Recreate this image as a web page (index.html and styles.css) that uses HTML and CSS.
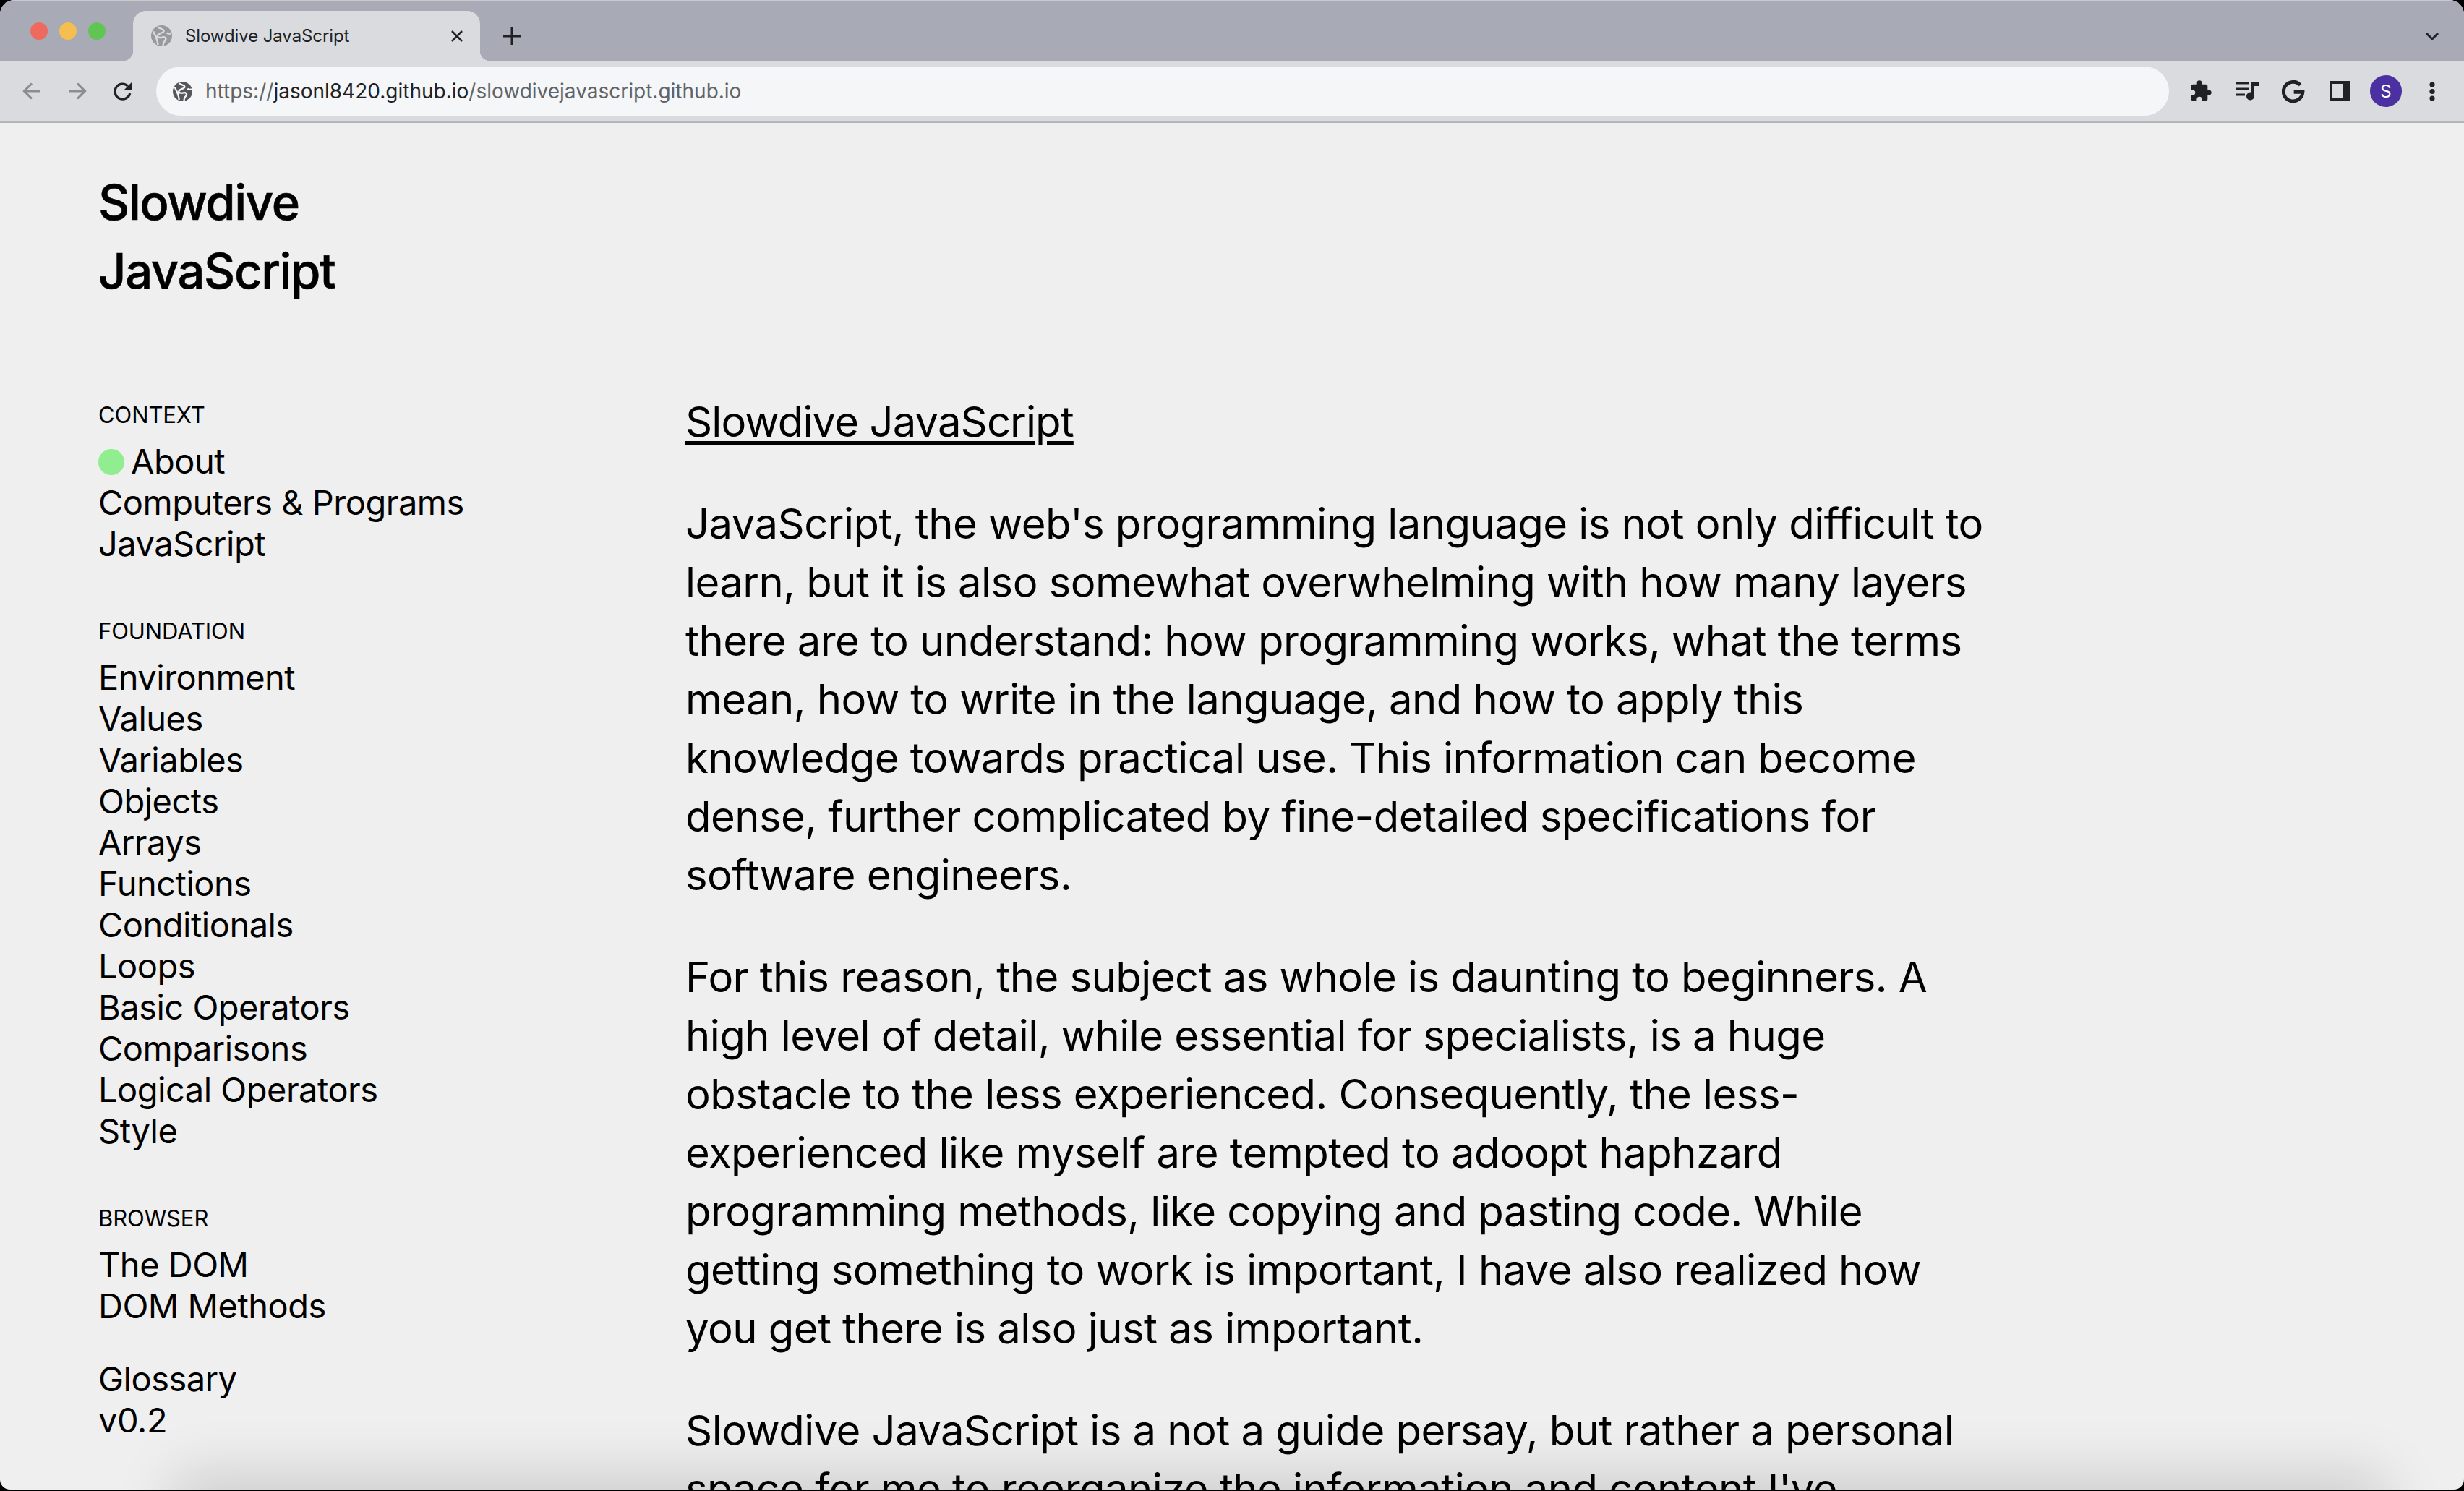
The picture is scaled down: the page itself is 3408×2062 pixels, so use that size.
FILE: index.html
```html
<!DOCTYPE html>
<html lang="en">
<head>
	<meta charset="UTF-8">
	<title>Slowdive JavaScript</title>
	<link rel="stylesheet" href="styles.css">
</head>
<body>
	<div class="window">
		<div class="tabbar">
			<div class="lights">
				<span class="light red"></span>
				<span class="light yellow"></span>
				<span class="light green"></span>
			</div>
			<div class="tab">
				<svg width="29" height="29" viewBox="0 0 28 28"><circle cx="14" cy="14" r="14" fill="#97999d"/><path d="M9 2c2 3 7 2 8 5s-6 3-8 6 3 4 6 3 6 1 4 4-3 3-3 8M3 8c1 4 3 5 4 9s2 5 2 9M21 10c2 2 4 1 6 1" fill="none" stroke="#d9dade" stroke-width="2.4"/></svg>
				<span class="tab-title">Slowdive JavaScript</span>
				<svg width="18" height="18" viewBox="0 0 18 18"><path d="M2 2l14 14M16 2L2 16" stroke="#202124" stroke-width="2.6" fill="none"/></svg>
			</div>
			<svg class="new-tab" width="24" height="24" viewBox="0 0 24 24"><path d="M12 0v24M0 12h24" stroke="#202124" stroke-width="3" fill="none"/></svg>
			<svg class="tab-menu" width="20" height="13" viewBox="0 0 20 13"><path d="M2 2l8 8 8-8" fill="none" stroke="#202124" stroke-width="3"/></svg>
		</div>
		<div class="toolbar">
			<svg class="nav" width="36" height="36" viewBox="0 0 24 24"><path d="M20 12H5M12 5l-7 7 7 7" fill="none" stroke="#8b8d91" stroke-width="2.1"/></svg>
			<svg class="nav" width="36" height="36" viewBox="0 0 24 24"><path d="M4 12h15M12 5l7 7-7 7" fill="none" stroke="#8b8d91" stroke-width="2.1"/></svg>
			<svg class="nav" width="36" height="36" viewBox="0 0 24 24"><path d="M18.5 14a7 7 0 1 1-1.9-6.6" fill="none" stroke="#202124" stroke-width="2.2"/><path d="M20 4v7h-7z" fill="#202124"/></svg>
			<div class="omnibox">
				<svg width="27" height="27" viewBox="0 0 28 28"><circle cx="14" cy="14" r="14" fill="#55575b"/><path d="M9 2c2 3 7 2 8 5s-6 3-8 6 3 4 6 3 6 1 4 4-3 3-3 8M3 8c1 4 3 5 4 9s2 5 2 9M21 10c2 2 4 1 6 1" fill="none" stroke="#f5f6f8" stroke-width="2.4"/></svg>
				<span class="url"><span class="url-dim">https://</span>jasonl8420.github.io<span class="url-dim">/slowdivejavascript.github.io</span></span>
			</div>
			<div class="tools">
				<span class="tool"><svg width="32" height="32" viewBox="0 0 24 24"><path d="M20.5 11H19V7a2 2 0 0 0-2-2h-4V3.5a2.5 2.5 0 0 0-5 0V5H4a2 2 0 0 0-2 2v3.8h1.5a2.7 2.7 0 0 1 0 5.4H2V20a2 2 0 0 0 2 2h3.8v-1.5a2.7 2.7 0 0 1 5.4 0V22H17a2 2 0 0 0 2-2v-4h1.5a2.5 2.5 0 0 0 0-5z" fill="#202124"/></svg></span>
				<span class="tool"><svg width="32" height="26" viewBox="0 0 32 26"><path d="M0 2h19M0 10h19M0 18h13" stroke="#202124" stroke-width="3" fill="none"/><path d="M22 1h10v5h-6v14a5.5 5.5 0 1 1-4-5.2z" fill="#202124"/></svg></span>
				<span class="tool"><svg width="32" height="32" viewBox="0 0 24 24"><path d="M19.2 5.8A10 10 0 1 0 21.7 13H12.5" fill="none" stroke="#202124" stroke-width="3.6"/></svg></span>
				<span class="tool"><svg width="28" height="28" viewBox="0 0 28 28"><path d="M0 0h28v28H0z" fill="#202124"/><path d="M4 4h14v20H4z" fill="#dadbdf"/></svg></span>
				<span class="tool"><span class="avatar">S</span></span>
				<span class="tool"><svg width="8" height="27" viewBox="0 0 8 27"><circle cx="4" cy="4" r="3.6" fill="#202124"/><circle cx="4" cy="13.5" r="3.6" fill="#202124"/><circle cx="4" cy="23" r="3.6" fill="#202124"/></svg></span>
			</div>
		</div>
		<div class="page">
			<aside class="sidebar">
				<h1 class="site-title">Slowdive<br>JavaScript</h1>
				<div class="nav-group">
					<h2 class="nav-heading">CONTEXT</h2>
					<a class="nav-link"><span class="dot"></span>About</a>
					<a class="nav-link">Computers &amp; Programs</a>
					<a class="nav-link">JavaScript</a>
				</div>
				<div class="nav-group">
					<h2 class="nav-heading">FOUNDATION</h2>
					<a class="nav-link">Environment</a>
					<a class="nav-link">Values</a>
					<a class="nav-link">Variables</a>
					<a class="nav-link">Objects</a>
					<a class="nav-link">Arrays</a>
					<a class="nav-link">Functions</a>
					<a class="nav-link">Conditionals</a>
					<a class="nav-link">Loops</a>
					<a class="nav-link">Basic Operators</a>
					<a class="nav-link">Comparisons</a>
					<a class="nav-link">Logical Operators</a>
					<a class="nav-link">Style</a>
				</div>
				<div class="nav-group">
					<h2 class="nav-heading">BROWSER</h2>
					<a class="nav-link">The DOM</a>
					<a class="nav-link">DOM Methods</a>
				</div>
				<div class="nav-group">
					<a class="nav-link">Glossary</a>
					<a class="nav-link">v0.2</a>
				</div>
			</aside>
			<main class="content">
				<h2 class="content-title">Slowdive JavaScript</h2>
				<p>JavaScript, the web's programming language is not only difficult to learn, but it is also somewhat overwhelming with how many layers there are to understand: how programming works, what the terms mean, how to write in the language, and how to apply this knowledge towards practical use. This information can become dense, further complicated by fine-detailed specifications for software engineers.</p>
				<p>For this reason, the subject as whole is daunting to beginners. A high level of detail, while essential for specialists, is a huge obstacle to the less experienced. Consequently, the less-experienced like myself are tempted to adoopt haphzard programming methods, like copying and pasting code. While getting something to work is important, I have also realized how you get there is also just as important.</p>
				<p>Slowdive JavaScript is a not a guide persay, but rather a personal space for me to reorganize the information and content I've</p>
			</main>
			<div class="bottom-shadow"></div>
		</div>
	</div>
</body>
</html>
```
FILE: styles.css
```css
html, body {
	margin: 0;
	padding: 0;
	height: 100%;
	overflow: hidden;
}
body {
	background-color: #000;
	font-family: "Inter", "Liberation Sans", sans-serif;
	color: #000;
}
.window {
	height: 2060px;
	display: flex;
	flex-direction: column;
	background-color: #efefef;
	border-radius: 20px 20px 14px 14px;
	overflow: hidden;
}

/* tabs */
.tabbar {
	height: 84px;
	box-sizing: border-box;
	border-top: 2px solid #c9cad0;
	background-color: #a8aab5;
	display: flex;
	align-items: flex-end;
	flex-shrink: 0;
}
.lights {
	display: flex;
	gap: 16px;
	padding: 0 38px 0 42px;
	align-self: flex-start;
	margin-top: 29px;
}
.light {
	width: 24px;
	height: 24px;
	border-radius: 50%;
}
.red { background-color: #ee6a5f; }
.yellow { background-color: #f5bf4f; }
.green { background-color: #61c554; }
.tab {
	position: relative;
	width: 480px;
	height: 69px;
	background-color: #dadbdf;
	border-radius: 18px 18px 0 0;
	display: flex;
	align-items: center;
	padding: 0 23px 0 25px;
	box-sizing: border-box;
	gap: 18px;
}
.tab::before,
.tab::after {
	content: "";
	position: absolute;
	bottom: 0;
	width: 14px;
	height: 14px;
}
.tab::before {
	left: -14px;
	background: radial-gradient(circle at 0 0, transparent 14px, #dadbdf 14.5px);
}
.tab::after {
	right: -14px;
	background: radial-gradient(circle at 100% 0, transparent 14px, #dadbdf 14.5px);
}
.tab-title {
	flex: 1;
	font-size: 24px;
	letter-spacing: -0.1px;
	color: #202124;
}
.new-tab {
	margin: 0 0 22px 32px;
}
.tab-menu {
	margin: 0 34px 27px auto;
}

/* toolbar */
.toolbar {
	height: 86px;
	box-sizing: border-box;
	background-color: #dadbdf;
	display: flex;
	align-items: center;
	flex-shrink: 0;
	padding: 0 12px 0 26px;
	border-bottom: 2px solid #b4b5b9;
}
.nav {
	margin-right: 27px;
}
.omnibox {
	flex: 1;
	height: 68px;
	margin-left: 1px;
	background-color: #f5f6f8;
	border-radius: 34px;
	display: flex;
	align-items: center;
	gap: 18px;
	padding: 0 23px;
}
.url {
	font-size: 28px;
	color: #202124;
}
.url-dim {
	color: #5f6368;
}
.tools {
	display: flex;
	margin-left: 12px;
}
.tool {
	width: 64px;
	height: 64px;
	display: flex;
	align-items: center;
	justify-content: center;
}
.avatar {
	width: 44px;
	height: 44px;
	border-radius: 50%;
	background-color: #4a30a0;
	color: #fff;
	font-size: 24px;
	display: flex;
	align-items: center;
	justify-content: center;
}

/* page */
.page {
	flex: 1;
	display: flex;
	position: relative;
	overflow: hidden;
	min-height: 0;
}
.sidebar {
	width: 948px;
	padding: 62px 0 0 136px;
	box-sizing: border-box;
	flex-shrink: 0;
}
.site-title {
	margin: 0 0 103px;
	font-size: 67px;
	line-height: 95px;
	font-weight: 500;
	letter-spacing: -1.4px;
	-webkit-text-stroke: 0.6px #000;
}
.nav-group {
	margin-bottom: 44px;
}
.nav-heading {
	margin: 0 0 12px;
	padding-top: 26px;
	font-size: 31px;
	line-height: 46px;
	font-weight: 400;
	letter-spacing: -0.1px;
}
.nav-link {
	display: block;
	font-size: 47px;
	line-height: 57px;
	font-weight: 400;
	letter-spacing: -0.5px;
}
.dot {
	display: inline-block;
	width: 36px;
	height: 36px;
	border-radius: 50%;
	background-color: #90ee90;
	margin-right: 9px;
	vertical-align: -2px;
}
.content {
	width: 1810px;
	padding-top: 373px;
	flex-shrink: 0;
}
.content-title {
	margin: 0 0 60px;
	font-size: 58px;
	line-height: 81px;
	font-weight: 400;
	letter-spacing: -0.9px;
	text-decoration: underline;
	text-decoration-thickness: 6px;
	text-underline-offset: 6px;
}
.content p {
	margin: 0 0 60px;
	font-size: 58px;
	line-height: 81px;
	font-weight: 400;
	letter-spacing: -0.55px;
}
.bottom-shadow {
	position: absolute;
	left: 260px;
	right: 130px;
	bottom: -50px;
	height: 50px;
	box-shadow: 0 0 80px 20px rgba(0, 0, 0, 0.15);
}
```
